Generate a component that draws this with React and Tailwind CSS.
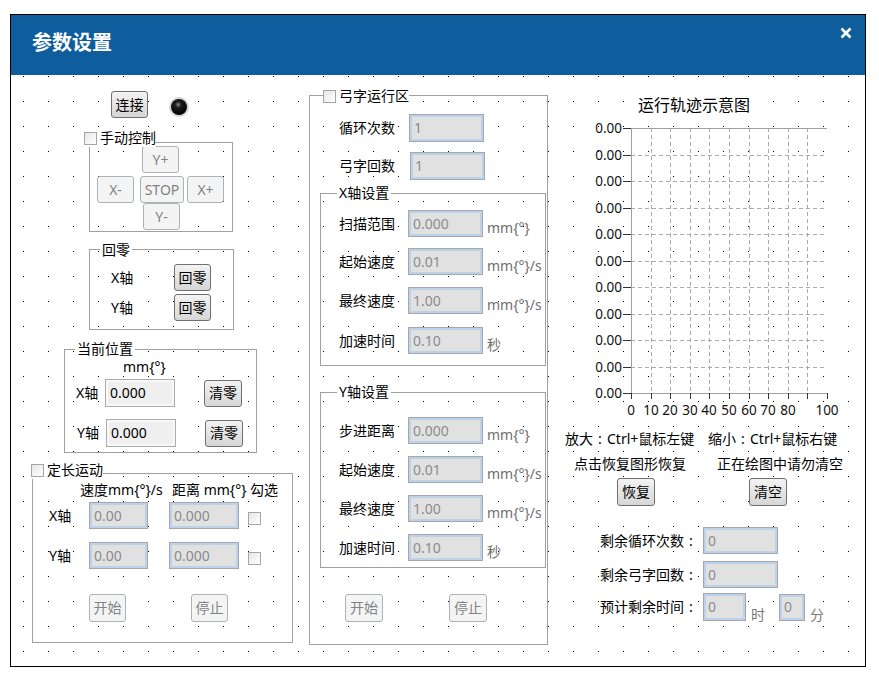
import React from "react";

const Btn = ({ children, className = "", disabled }) => (
  <button
    type="button"
    className={`flex shrink-0 items-center justify-center rounded-[3px] border text-[14px] leading-none ${
      disabled
        ? "border-[#adb2b5] bg-[#f4f4f4] text-[#838383]"
        : "border-[#707070] bg-linear-to-b from-[#f3f3f3] to-[#d6d6d6] text-black"
    } ${className}`}
  >
    {children}
  </button>
);

const Box = ({ value, className = "", ro }) => (
  <div
    className={`flex shrink-0 items-center pl-[4px] text-[14px] ${
      ro
        ? "border border-[#ababab] bg-[#efefef] text-black shadow-[inset_0_0_0_2px_#f8f8f8]"
        : "border border-[#a7a7a7] bg-[#e1e1e1] text-[#8c8c8c] shadow-[inset_0_0_0_2px_#bcd2ea]"
    } ${className}`}
  >
    {value}
  </div>
);

const Check = ({ className = "" }) => (
  <span
    className={`inline-block h-[13px] w-[13px] shrink-0 border border-[#a5a5a5] bg-linear-to-br from-[#e6e6e6] to-white ${className}`}
  />
);

// full-width colon, centred like the original UI font
const Colon = () => <span className="inline-block w-[14px] text-center">:</span>;

const Group = ({ title, check, className = "", titleClass = "", children }) => (
  <div className={`relative shrink-0 border border-[#a0a0a0] ${className}`}>
    <div className={`absolute flex items-center bg-white leading-[18px] ${titleClass}`}>
      {check && <Check className="mr-[3px]" />}
      <span>{title}</span>
    </div>
    {children}
  </div>
);

const Field = ({ label, value, unit, className = "", labelClass = "ml-[18px] w-[69px]", boxClass = "w-[75px] h-[27px]" }) => (
  <div className={`flex items-center ${className}`}>
    <span className={labelClass}>{label}</span>
    <Box value={value} className={boxClass} />
    {unit && <span className="ml-[4px] translate-y-[4px] text-[#6f6f6f]">{unit}</span>}
  </div>
);

const Led = () => (
  <svg width="20" height="20" className="ml-[21px] mt-[6px] shrink-0">
    <defs>
      <radialGradient id="led" cx="45%" cy="35%" r="65%">
        <stop offset="0" stopColor="#8a8a8a" />
        <stop offset="0.3" stopColor="#1c1c1c" />
        <stop offset="1" stopColor="#000" />
      </radialGradient>
    </defs>
    <circle cx="10" cy="10" r="10" fill="#d6d6d6" />
    <circle cx="10" cy="10" r="8" fill="url(#led)" />
  </svg>
);

const Chart = () => {
  const x0 = 41;
  const x1 = 237;
  const ys = Array.from({ length: 11 }, (_, i) => Math.round(10 + i * 26.5));
  const xs = Array.from({ length: 11 }, (_, i) => Math.round(41 + i * 19.6));
  const xl = ["0", "10", "20", "30", "40", "50", "60", "70", "80", "", "100"];
  return (
    <svg width="250" height="302" className="ml-[42px] mt-[3px] block shrink-0">
      {ys.slice(1, 10).map((y) => (
        <line key={"h" + y} x1={x0} x2={x1} y1={y + 0.5} y2={y + 0.5} stroke="#ababab" strokeDasharray="4 3" />
      ))}
      {xs.slice(1, 10).map((x) => (
        <line key={"v" + x} x1={x + 0.5} x2={x + 0.5} y1={10} y2={275} stroke="#ababab" strokeDasharray="4 3" />
      ))}
      <line x1={x0} x2={x1} y1={10.5} y2={10.5} stroke="#a0a0a0" />
      <line x1={x0 + 0.5} x2={x0 + 0.5} y1={10} y2={276} stroke="#a0a0a0" />
      <line x1={x0} x2={x1} y1={275.5} y2={275.5} stroke="#a0a0a0" />
      {ys.map((y) => (
        <g key={"y" + y}>
          <line x1={33} x2={41} y1={y + 0.5} y2={y + 0.5} stroke="#333" />
          <text x={32} y={y + 5} textAnchor="end" fontSize="13.5" fill="#111">
            0.00
          </text>
        </g>
      ))}
      {xs.map((x, i) => (
        <g key={"x" + x}>
          <line x1={x + 0.5} x2={x + 0.5} y1={275} y2={281} stroke="#333" />
          <text x={x} y={297} textAnchor="middle" fontSize="13.5" fill="#111">
            {xl[i]}
          </text>
        </g>
      ))}
    </svg>
  );
};

const App = () => {
  return (
    <div className="min-h-screen bg-white pl-[10px] pt-[14px] font-['Noto_Sans','Noto_Sans_CJK_SC',sans-serif] text-[14px] leading-[18px] text-black">
      <div className="flex h-[653px] w-[856px] flex-col border border-black">
        <div className="flex h-[60px] shrink-0 items-start justify-between bg-[#0e5d9d]">
          <h1 className="pl-[21px] pt-[14px] text-[20px] font-bold leading-[28px] text-white">参数设置</h1>
          <svg width="12" height="12" className="mr-[13px] mt-[12px]">
            <path d="M1.5 1.5 L10.5 10.5 M10.5 1.5 L1.5 10.5" stroke="#fff" strokeWidth="2.6" />
          </svg>
        </div>

        <div className="relative flex flex-1">
          <svg className="absolute inset-0 h-full w-full">
            <defs>
              <pattern id="dots" x="12" y="1" width="25" height="25" patternUnits="userSpaceOnUse">
                <rect width="1" height="1" fill="#000" />
              </pattern>
            </defs>
            <rect width="100%" height="100%" fill="url(#dots)" />
          </svg>

          {/* left column */}
          <div className="relative flex w-[298px] shrink-0 flex-col items-start">
            <div className="ml-[100px] mt-[16px] flex items-start">
              <Btn className="h-[27px] w-[37px]">连接</Btn>
              <Led />
            </div>

            <Group title="手动控制" check className="ml-[78px] mt-[24px] h-[90px] w-[144px]" titleClass="-left-[6px] -top-[14px]">
              <Btn disabled className="ml-[52px] mt-[3px] h-[27px] w-[37px]">Y+</Btn>
              <div className="mt-[3px] flex">
                <Btn disabled className="ml-[7px] h-[27px] w-[37px]">X-</Btn>
                <Btn disabled className="ml-[6px] h-[27px] w-[44px]">STOP</Btn>
                <Btn disabled className="ml-[3px] h-[27px] w-[37px]">X+</Btn>
              </div>
              <Btn disabled className="ml-[53px] h-[27px] w-[37px]">Y-</Btn>
            </Group>

            <Group title="回零" className="ml-[78px] mt-[17px] h-[81px] w-[145px]" titleClass="left-[10px] -top-[9px] px-[2px]">
              <div className="mt-[14px] flex items-center">
                <span className="ml-[21px] w-[63px]">X轴</span>
                <Btn className="h-[27px] w-[37px]">回零</Btn>
              </div>
              <div className="mt-[3px] flex items-center">
                <span className="ml-[21px] w-[63px]">Y轴</span>
                <Btn className="h-[27px] w-[37px]">回零</Btn>
              </div>
            </Group>

            <Group title="当前位置" className="ml-[53px] mt-[19px] h-[104px] w-[193px]" titleClass="left-[10px] -top-[10px] px-[2px]">
              <div className="ml-[58px] mt-[8px]">{"mm{°}"}</div>
              <div className="mt-[3px] flex items-center">
                <span className="ml-[11px] w-[29px]">X轴</span>
                <Box ro value="0.000" className="h-[28px] w-[70px]" />
                <Btn className="ml-[29px] h-[27px] w-[38px]">清零</Btn>
              </div>
              <div className="mt-[12px] flex items-center">
                <span className="ml-[12px] w-[29px]">Y轴</span>
                <Box ro value="0.000" className="h-[28px] w-[70px]" />
                <Btn className="ml-[29px] h-[27px] w-[38px]">清零</Btn>
              </div>
            </Group>

            <Group title="定长运动" check className="ml-[21px] mt-[20px] h-[170px] w-[261px]" titleClass="-left-[2px] -top-[13px]">
              <div className="mt-[7px] flex">
                <span className="ml-[47px] w-[92px]">速度{"mm{°}/s"}</span>
                <span>距离 {"mm{°}"} 勾选</span>
              </div>
              <div className="mt-[3px] flex items-center">
                <span className="ml-[16px] w-[40px]">X轴</span>
                <Box value="0.00" className="h-[27px] w-[59px]" />
                <Box value="0.000" className="ml-[21px] h-[27px] w-[70px]" />
                <Check className="ml-[9px] mt-[5px]" />
              </div>
              <div className="mt-[13px] flex items-center">
                <span className="ml-[16px] w-[40px]">Y轴</span>
                <Box value="0.00" className="h-[27px] w-[59px]" />
                <Box value="0.000" className="ml-[21px] h-[27px] w-[70px]" />
                <Check className="ml-[9px] mt-[5px]" />
              </div>
              <div className="mt-[25px] flex">
                <Btn disabled className="ml-[56px] h-[28px] w-[37px]">开始</Btn>
                <Btn disabled className="ml-[65px] h-[28px] w-[37px]">停止</Btn>
              </div>
            </Group>
          </div>

          {/* middle column */}
          <div className="relative flex w-[239px] shrink-0 flex-col">
            <Group title="弓字运行区" check className="mt-[20px] h-[550px] w-[239px]" titleClass="left-[13px] -top-[9px]">
              <Field label="循环次数" value="1" className="mt-[18px]" labelClass="ml-[29px] w-[70px]" boxClass="h-[28px] w-[75px]" />
              <Field label="弓字回数" value="1" className="mt-[10px]" labelClass="ml-[29px] w-[71px]" boxClass="h-[28px] w-[75px]" />

              <Group title="X轴设置" className="ml-[10px] mt-[13px] h-[173px] w-[226px]" titleClass="left-[16px] -top-[10px] px-[2px]">
                <Field label="扫描范围" value="0.000" unit={"mm{°}"} className="mt-[16px]" />
                <Field label="起始速度" value="0.01" unit={"mm{°}/s"} className="mt-[11px]" />
                <Field label="最终速度" value="1.00" unit={"mm{°}/s"} className="mt-[12px]" />
                <Field label="加速时间" value="0.10" unit="秒" className="mt-[13px]" />
              </Group>

              <Group title="Y轴设置" className="ml-[10px] mt-[26px] h-[176px] w-[226px]" titleClass="left-[16px] -top-[10px] px-[2px]">
                <Field label="步进距离" value="0.000" unit={"mm{°}"} className="mt-[24px]" />
                <Field label="起始速度" value="0.01" unit={"mm{°}/s"} className="mt-[12px]" />
                <Field label="最终速度" value="1.00" unit={"mm{°}/s"} className="mt-[12px]" />
                <Field label="加速时间" value="0.10" unit="秒" className="mt-[12px]" />
              </Group>

              <div className="mt-[26px] flex">
                <Btn disabled className="ml-[35px] h-[28px] w-[38px]">开始</Btn>
                <Btn disabled className="ml-[66px] h-[28px] w-[38px]">停止</Btn>
              </div>
            </Group>
          </div>

          {/* right column */}
          <div className="relative flex flex-1 flex-col">
            <div className="ml-[90px] mt-[20px] text-[16px] leading-[20px]">运行轨迹示意图</div>
            <Chart />
            <div className="mt-[10px] flex">
              <span className="ml-[17px] w-[143px] whitespace-nowrap">
                放大<Colon />Ctrl+鼠标左键
              </span>
              <span className="whitespace-nowrap">
                缩小<Colon />Ctrl+鼠标右键
              </span>
            </div>
            <div className="mt-[7px] flex">
              <span className="ml-[26px] w-[143px] whitespace-nowrap">点击恢复图形恢复</span>
              <span className="whitespace-nowrap">正在绘图中请勿清空</span>
            </div>
            <div className="mt-[5px] flex">
              <Btn className="ml-[69px] h-[28px] w-[38px]">恢复</Btn>
              <Btn className="ml-[94px] h-[28px] w-[38px]">清空</Btn>
            </div>
            <div className="mt-[21px] flex items-center">
              <span className="w-[150px] text-right">
                剩余循环次数<Colon />
              </span>
              <Box value="0" className="ml-[5px] h-[27px] w-[75px]" />
            </div>
            <div className="mt-[7px] flex items-center">
              <span className="w-[150px] text-right">
                剩余弓字回数<Colon />
              </span>
              <Box value="0" className="ml-[5px] h-[27px] w-[75px]" />
            </div>
            <div className="mt-[5px] flex items-center">
              <span className="w-[150px] text-right">
                预计剩余时间<Colon />
              </span>
              <Box value="0" className="ml-[5px] h-[28px] w-[43px]" />
              <span className="ml-[5px] translate-y-[8px] text-[#7a7a7a]">时</span>
              <Box value="0" className="ml-[14px] h-[27px] w-[26px]" />
              <span className="ml-[5px] translate-y-[8px] text-[#7a7a7a]">分</span>
            </div>
          </div>
        </div>
      </div>
    </div>
  );
};

export default App;
